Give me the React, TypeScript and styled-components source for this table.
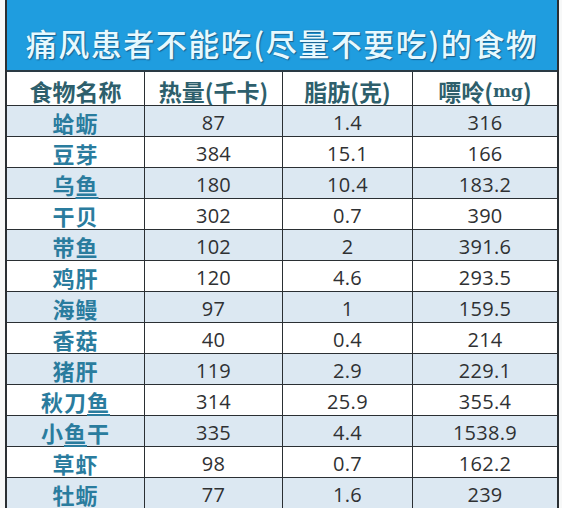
import React from "react";
import styled, { createGlobalStyle } from "styled-components";

const Global = createGlobalStyle`
  html, body { margin: 0; padding: 0; background: #f7f8f8; }
  body { width: 562px; height: 508px; overflow: hidden; }
`;

const Page = styled.div`
  padding-left: 5px;
  width: 554px;
`;

const Table = styled.div`
  border-left: 2px solid #2a2f33;
  border-right: 2px solid #2a2f33;
  background: #fff;
`;

const Title = styled.div`
  height: 72px;
  background: #1f9ddf;
  border-bottom: 2px solid #2a3a44;
  box-sizing: border-box;
  display: flex;
  align-items: center;
  justify-content: center;
  padding-top: 14px;
  font-family: "Noto Sans CJK SC", sans-serif;
  font-weight: 500;
  font-size: 31px;
  letter-spacing: 1.5px;
  color: #e6f9ff;
  text-shadow: 0 0 1px #2a6f97, 1px 1px 1px rgba(20, 70, 110, 0.7);
  white-space: nowrap;
`;

const Row = styled.div<{ $shade?: boolean; $h?: number }>`
  display: grid;
  grid-template-columns: 138px 138px 130px 144px;
  height: ${(p) => p.$h ?? 31}px;
  box-sizing: border-box;
  border-bottom: 1.5px solid #2a2f33;
  background: ${(p) => (p.$shade ? "#dce8f2" : "#ffffff")};
`;

const Cell = styled.div`
  display: flex;
  align-items: center;
  justify-content: center;
  border-right: 1.5px solid #2a2f33;
  white-space: nowrap;
  &:last-child { border-right: none; }
`;

const HeadCell = styled(Cell)`
  font-family: "Noto Sans CJK SC", sans-serif;
  font-weight: 700;
  font-size: 23px;
  color: #2e5f6c;
  padding-top: 2px;
`;

const Unit = styled.span`
  font-family: "DejaVu Serif", serif;
  font-weight: 700;
  font-size: 17px;
`;

const Name = styled(Cell)`
  font-family: "Noto Sans CJK SC", sans-serif;
  font-weight: 700;
  font-size: 22px;
  color: #2a7c9e;
  letter-spacing: 1px;
`;

const Link = styled.span`
  text-decoration: underline;
  text-decoration-thickness: 1.5px;
  text-underline-offset: 3px;
`;

const Num = styled(Cell)`
  font-family: "Open Sans", "Lato", sans-serif;
  font-size: 20px;
  letter-spacing: 0.3px;
  color: #2f3133;
`;

type Item = { name: React.ReactNode; kcal: string; fat: string; pur: string };

const data: Item[] = [
  { name: "蛤蛎", kcal: "87", fat: "1.4", pur: "316" },
  { name: "豆芽", kcal: "384", fat: "15.1", pur: "166" },
  { name: <span>乌<Link>鱼</Link></span>, kcal: "180", fat: "10.4", pur: "183.2" },
  { name: "干贝", kcal: "302", fat: "0.7", pur: "390" },
  { name: "带鱼", kcal: "102", fat: "2", pur: "391.6" },
  { name: "鸡肝", kcal: "120", fat: "4.6", pur: "293.5" },
  { name: "海鳗", kcal: "97", fat: "1", pur: "159.5" },
  { name: "香菇", kcal: "40", fat: "0.4", pur: "214" },
  { name: "猪肝", kcal: "119", fat: "2.9", pur: "229.1" },
  { name: <span>秋刀<Link>鱼</Link></span>, kcal: "314", fat: "25.9", pur: "355.4" },
  { name: <span>小<Link>鱼</Link>干</span>, kcal: "335", fat: "4.4", pur: "1538.9" },
  { name: "草虾", kcal: "98", fat: "0.7", pur: "162.2" },
  { name: "牡蛎", kcal: "77", fat: "1.6", pur: "239" },
];

export default function App() {
  return (
    <Page>
      <Global />
      <Table>
        <Title>痛风患者不能吃(尽量不要吃)的食物</Title>
        <Row $h={34}>
          <HeadCell>食物名称</HeadCell>
          <HeadCell>热量(千卡)</HeadCell>
          <HeadCell>脂肪(克)</HeadCell>
          <HeadCell>嘌呤(<Unit>mg</Unit>)</HeadCell>
        </Row>
        {data.map((d, i) => (
          <Row key={i} $shade={i % 2 === 0}>
            <Name>{d.name}</Name>
            <Num>{d.kcal}</Num>
            <Num>{d.fat}</Num>
            <Num>{d.pur}</Num>
          </Row>
        ))}
      </Table>
    </Page>
  );
}
